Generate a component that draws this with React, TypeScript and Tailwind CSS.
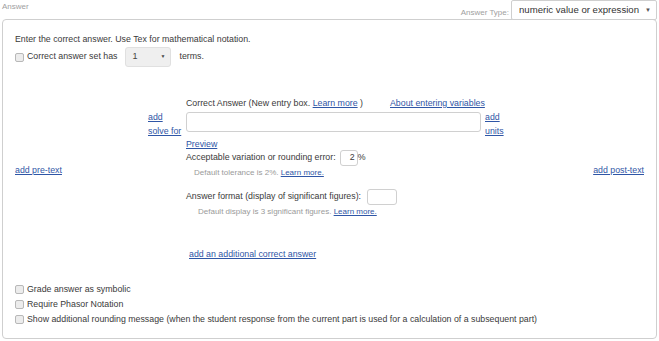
import React from "react";

const font = { fontFamily: '"Liberation Sans", Arial, sans-serif' };

function Box() {
  return (
    <span className="inline-block w-[9px] h-[9px] rounded-[2px] border border-[#b8b8b8] bg-[#ececec] shrink-0" />
  );
}

function Link({ children, className = "" }: { children: React.ReactNode; className?: string }) {
  return <a className={"text-[#2f56a6] underline decoration-[#2f56a6] cursor-pointer " + className}>{children}</a>;
}

export default function App() {
  return (
    <div className="w-[659px] h-[341px] bg-white text-[#3a3a3a] overflow-hidden" style={font}>
      {/* header */}
      <div className="flex h-[19px] items-start">
        <div className="pl-[2px] pt-[2px] text-[8px] leading-[10px] text-[#a0a0a0]">Answer</div>
        <div className="flex-1" />
        <div className="flex items-center h-[20px] relative z-10">
          <span className="text-[8px] text-[#a0a0a0] mr-[2px] mt-[6px]">Answer Type:</span>
          <div className="w-[146px] h-[20px] border border-[#cfcfcf] rounded-[2px] bg-white flex items-center pl-[7px] pr-[5px] text-[9.6px] text-[#333]">
            <span className="flex-1">numeric value or expression</span>
            <span className="text-[6px] text-[#555]">▼</span>
          </div>
          <div className="w-[2px]" />
        </div>
      </div>

      {/* panel */}
      <div className="ml-[2px] w-[655px] h-[320px] border border-[#cfcfcf] rounded-[4px] pl-[12px] pr-[12px] pt-[13px] text-[8.8px]">
        <div className="leading-[12px]">Enter the correct answer. Use Tex for mathematical notation.</div>
        <div className="mt-[2px] h-[20px] flex items-center">
          <Box />
          <span className="ml-[3px]">Correct answer set has</span>
          <div className="ml-[8px] w-[46px] h-[20px] bg-[#efefef] border border-[#e0e0e0] rounded-[3px] flex items-center pl-[6px] pr-[5px] text-[9px] text-[#444]">
            <span className="flex-1">1</span>
            <span className="text-[5px] text-[#444]">▼</span>
          </div>
          <span className="ml-[8px]">terms.</span>
        </div>

        {/* middle */}
        <div className="mt-[30px] flex items-start">
          <div className="w-[133px] mt-[67px] leading-[12px]">
            <Link>add pre-text</Link>
          </div>
          <div className="w-[38px] mt-[13px] leading-[14px] flex flex-col">
            <Link>add</Link>
            <Link>solve for</Link>
          </div>
          <div className="w-[295px]">
            <div className="leading-[12px] flex whitespace-nowrap">
              <span>Correct Answer (New entry box.&nbsp;</span>
              <Link>Learn more</Link>
              <span>&nbsp;)</span>
              <Link className="ml-[27px]">About entering variables</Link>
            </div>
            <div className="mt-[3px] h-[20px] w-[295px] border border-[#d0d0d0] rounded-[3px] bg-white" />
            <div className="mt-[6px] leading-[12px]">
              <Link>Preview</Link>
            </div>
            <div className="h-[16px] flex items-center">
              <span>Acceptable variation or rounding error:</span>
              <div className="ml-[4px] w-[18px] h-[16px] border border-[#d0d0d0] rounded-[3px] flex items-center justify-end pr-[2px]">2</div>
              <span>%</span>
            </div>
            <div className="mt-[2px] pl-[8px] text-[8px] leading-[10px] text-[#9a9a9a]">
              Default tolerance is 2%. <Link>Learn more.</Link>
            </div>
            <div className="mt-[11px] h-[16px] flex items-center">
              <span>Answer format (display of significant figures):</span>
              <div className="ml-[6px] w-[30px] h-[16px] border border-[#d0d0d0] rounded-[3px]" />
            </div>
            <div className="mt-[2px] pl-[12px] text-[8px] leading-[10px] text-[#9a9a9a]">
              Default display is 3 significant figures. <Link>Learn more.</Link>
            </div>
            <div className="mt-[31px] pl-[3px] leading-[12px]">
              <Link>add an additional correct answer</Link>
            </div>
          </div>
          <div className="ml-[4px] mt-[13px] leading-[14px] flex flex-col">
            <Link>add</Link>
            <Link>units</Link>
          </div>
          <div className="flex-1" />
          <div className="mt-[67px] leading-[12px]">
            <Link>add post-text</Link>
          </div>
        </div>

        {/* bottom checkboxes */}
        <div className="mt-[22px] flex flex-col">
          <div className="h-[15px] flex items-center">
            <Box />
            <span className="ml-[3px]">Grade answer as symbolic</span>
          </div>
          <div className="h-[15px] flex items-center">
            <Box />
            <span className="ml-[3px]">Require Phasor Notation</span>
          </div>
          <div className="h-[15px] flex items-center">
            <Box />
            <span className="ml-[3px]">
              Show additional rounding message (when the student response from the current part is used for a calculation of a subsequent part)
            </span>
          </div>
        </div>
      </div>
    </div>
  );
}
